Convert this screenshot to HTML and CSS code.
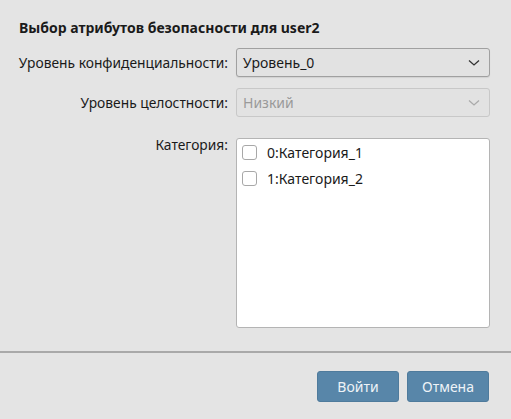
FILE: index.html
```html
<!DOCTYPE html>
<html lang="ru">
<head>
<meta charset="utf-8">
<link rel="stylesheet" href="styles.css">
</head>
<body>
<div class="dialog">
  <div class="content">
    <div class="title">Выбор атрибутов безопасности для user2</div>
    <div class="form">
      <div class="label">Уровень конфиденциальности:</div>
      <div class="select">
        <span>Уровень_0</span>
        <svg class="chev" width="12" height="8" viewBox="0 0 12 8"><path d="M1 1.5 L6 6 L11 1.5" fill="none" stroke="#333" stroke-width="1.3"/></svg>
      </div>
      <div class="label">Уровень целостности:</div>
      <div class="select disabled">
        <span>Низкий</span>
        <svg class="chev" width="12" height="8" viewBox="0 0 12 8"><path d="M1 1.5 L6 6 L11 1.5" fill="none" stroke="#aaa" stroke-width="1.3"/></svg>
      </div>
      <div class="label top">Категория:</div>
      <div class="list">
        <div class="item"><span class="cb"></span><span>0:Категория_1</span></div>
        <div class="item"><span class="cb"></span><span>1:Категория_2</span></div>
      </div>
    </div>
  </div>
  <div class="footer">
    <button class="btn">Войти</button>
    <button class="btn">Отмена</button>
  </div>
</div>
</body>
</html>
```
FILE: styles.css
```css
html, body {
  margin: 0;
  padding: 0;
  background: #e4e4e4;
}
body {
  font-family: "Noto Sans", "DejaVu Sans", sans-serif;
  font-size: 14px;
  color: #1a1a1a;
  width: 511px;
  height: 419px;
  overflow: hidden;
}
.dialog {
  display: flex;
  flex-direction: column;
  height: 419px;
}
.content {
  padding: 18px 21px 0 0;
  height: 353px;
  box-sizing: border-box;
  border-bottom: 2px solid #a9a9a9;
}
.title {
  font-weight: bold;
  font-size: 14px;
  line-height: 19px;
  margin: 0 0 11px 19px;
}
.form {
  display: grid;
  grid-template-columns: 228px 254px;
  column-gap: 8px;
  row-gap: 11px;
  align-items: center;
}
.label {
  text-align: right;
  line-height: 19px;
  font-size: 13.8px;
  white-space: nowrap;
}
.label.top {
  align-self: start;
  margin-top: 7px;
}
.select {
  height: 29px;
  box-sizing: border-box;
  border: 1px solid #a0a0a0;
  border-radius: 3px;
  background: #e2e2e2;
  display: flex;
  align-items: center;
  justify-content: space-between;
  padding: 0 9px 0 6px;
  font-size: 14px;
  box-shadow: 0 1px 1px rgba(0,0,0,0.08);
}
.select.disabled {
  border-color: #c8c8c8;
  color: #9a9a9a;
  box-shadow: none;
}
.list {
  margin-top: 10px;
  height: 190px;
  box-sizing: border-box;
  border: 1px solid #b4b4b4;
  border-radius: 3px;
  background: #fff;
  padding: 0 0 0 5px;
}
.item {
  display: flex;
  align-items: center;
  height: 26px;
  gap: 10px;
}
.cb {
  width: 15px;
  height: 15px;
  box-sizing: border-box;
  border: 1px solid #a8a8a8;
  border-radius: 3px;
  background: #fff;
}
.footer {
  display: flex;
  justify-content: flex-end;
  gap: 8px;
  padding: 18px 22px 0 0;
}
.btn {
  width: 82px;
  height: 31px;
  background: #5886a9;
  border: 1px solid #4f7b9c;
  border-radius: 3px;
  color: #eef3f7;
  font-family: "Noto Sans", "DejaVu Sans", sans-serif;
  font-size: 14px;
  padding: 0;
}
```
